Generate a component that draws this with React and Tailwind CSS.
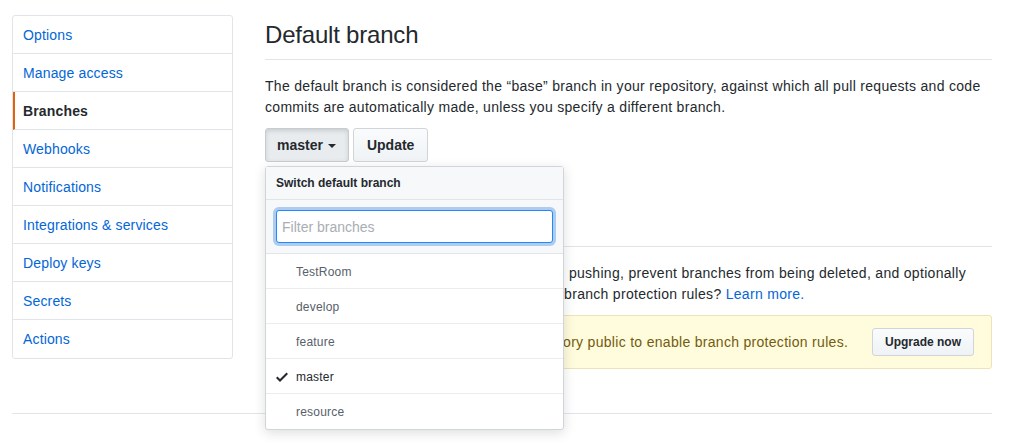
import React from 'react';

const navItems = [
    'Options',
    'Manage access',
    'Branches',
    'Webhooks',
    'Notifications',
    'Integrations & services',
    'Deploy keys',
    'Secrets',
    'Actions',
];

const branches = ['TestRoom', 'develop', 'feature', 'master', 'resource'];

const CheckIcon = () => (
    <svg width="12" height="16" viewBox="0 0 12 16" className="fill-[#24292e]">
        <path fillRule="evenodd" d="M12 5l-8 8-4-4 1.5-1.5L4 10l6.5-6.5L12 5z" />
    </svg>
);

const Sidebar = () => (
    <nav className="w-[221px] shrink-0 self-start rounded-[3px] border border-[#e1e4e8] bg-white">
        {navItems.map((item, i) => {
            const active = item === 'Branches';
            return (
                <div
                    key={item}
                    className={`flex h-[38px] items-center px-[10px] pt-[1px] text-[14px] tracking-[0.15px] ${
                        i < navItems.length - 1 ? 'border-b border-[#e1e4e8]' : ''
                    } ${
                        active
                            ? 'border-l-2 border-l-[#e36209] pl-[8px] font-semibold text-[#24292e]'
                            : 'text-[#0366d6]'
                    }`}
                >
                    {item}
                </div>
            );
        })}
    </nav>
);

const BranchMenu = () => (
    <div className="absolute left-0 top-[38px] z-10 w-[299px] rounded-[3px] border border-[#d1d5da] bg-white shadow-[0_3px_12px_rgba(27,31,35,0.15)]">
        <div className="flex h-[33px] items-center border-b border-[#e1e4e8] bg-[#f6f8fa] px-[10px] text-[12px] font-bold text-[#24292e]">
            Switch default branch
        </div>
        <div className="border-b border-[#e1e4e8] bg-[#f6f8fa] p-[10px]">
            <input
                className="block h-[33px] w-full rounded-[3px] border border-[#2188ff] bg-white px-[5px] text-[14px] text-[#24292e] shadow-[0_0_0_3px_rgba(3,102,214,0.3)] outline-none placeholder:text-[#a8aeb4]"
                placeholder="Filter branches"
                readOnly
            />
        </div>
        {branches.map((b, i) => (
            <div
                key={b}
                className={`flex h-[35px] items-center gap-[8px] px-[10px] pt-[1px] text-[12px] tracking-[0.2px] ${
                    i < branches.length - 1 ? 'border-b border-[#eaecef]' : ''
                } ${b === 'master' ? 'text-[#24292e]' : 'text-[#586069]'}`}
            >
                <span className="flex w-[12px] justify-center">{b === 'master' && <CheckIcon />}</span>
                <span>{b}</span>
            </div>
        ))}
    </div>
);

export default function App() {
    return (
        <div className="min-h-[443px] bg-white font-['Liberation_Sans',Arial,sans-serif] text-[#24292e]">
            <div className="mx-[12px] w-[980px] pt-[15px]">
                <div className="flex gap-[32px]">
                    <Sidebar />

                    <main className="w-[727px]">
                        <h2 className="border-b border-[#e1e4e8] pb-[6px] pt-[2px] text-[24px] font-normal leading-[36px] tracking-[-0.2px]">
                            Default branch
                        </h2>
                        <p className="mb-[10px] mt-[16px] text-[14px] leading-[21px] tracking-[0.3px]">
                            The default branch is considered the “base” branch in your repository, against which all pull requests and code
                            commits are automatically made, unless you specify a different branch.
                        </p>

                        <div className="relative flex gap-[4px]">
                            <button className="flex h-[34px] items-center rounded-[3px] border border-[#c7ccd1] bg-[#e9ecef] pl-[11px] pr-[12px] text-[14px] font-semibold text-[#24292e] shadow-[inset_0_2px_4px_rgba(27,31,35,0.15)]">
                                master
                                <span className="ml-[5px] mt-[2px] inline-block border-x-[4px] border-t-[4px] border-x-transparent border-t-[#24292e]" />
                            </button>
                            <button className="h-[34px] rounded-[3px] border border-[#d1d5da] bg-gradient-to-b from-[#fafbfc] to-[#eff3f6] px-[13px] text-[14px] font-semibold text-[#24292e]">
                                Update
                            </button>
                            <BranchMenu />
                        </div>

                        <h2 className="mt-[40px] border-b border-[#e1e4e8] pb-[6px] pt-[2px] text-[24px] font-normal leading-[36px]">
                            Branch protection rules
                        </h2>
                        <p className="mb-[10px] mt-[16px] text-[14px] leading-[21px] tracking-[0.3px]">
                            Define branch protection rules to disable force pushing, prevent branches from being deleted, and optionally
                            require status checks before merging. New to branch protection rules?{' '}
                            <a className="text-[#0366d6]">Learn more.</a>
                        </p>

                        <div className="flex h-[54px] items-center justify-between rounded-[3px] border border-[#efe3b5] bg-[#fffbdd] pl-[16px] pr-[17px] text-[14px] tracking-[0.3px] text-[#735c0f]">
                            <span>Upgrade to GitHub Pro or make this repository public to enable branch protection rules.</span>
                            <button className="h-[28px] rounded-[3px] border border-[#d1d5da] bg-gradient-to-b from-[#fafbfc] to-[#eff3f6] px-[12px] text-[12px] font-semibold tracking-normal text-[#24292e]">
                                Upgrade now
                            </button>
                        </div>
                    </main>
                </div>

                <div className="mt-[44px] border-t border-[#e1e4e8]" />
            </div>
        </div>
    );
}
